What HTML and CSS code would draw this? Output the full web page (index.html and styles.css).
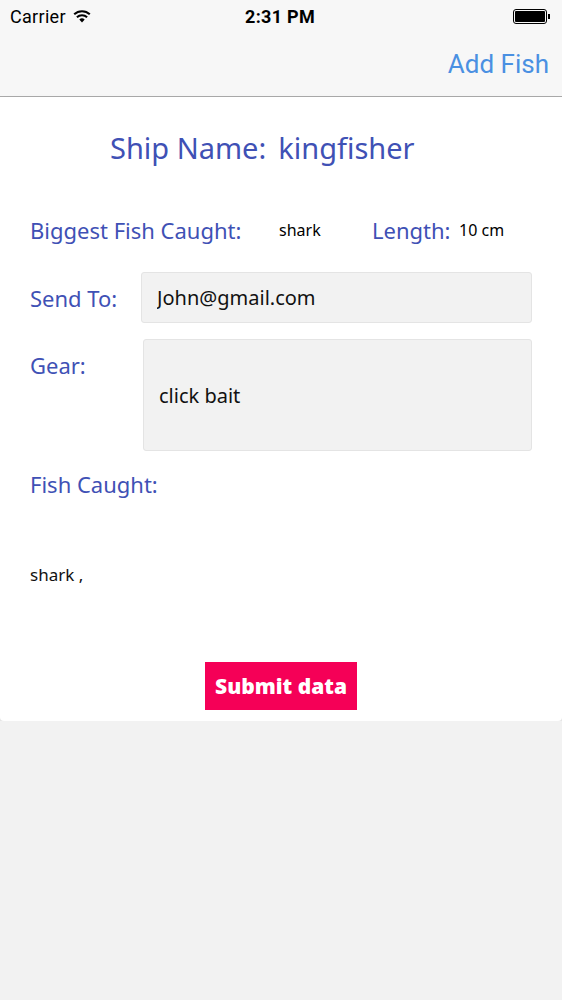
FILE: index.html
```html
<!DOCTYPE html>
<html>
<head>
    <title>Fish Log</title>
    <link rel="stylesheet" href="styles.css">
</head>
<body>
    <div class="topbar">
        <div class="status-bar">
            <div class="carrier">Carrier
                <svg class="wifi" width="18" height="13" viewBox="0 0 18 13">
                    <path d="M9 12.5 L6.3 9.6 A4 4 0 0 1 11.7 9.6 Z" fill="#000"/>
                    <path d="M3.9 7.2 A7.4 7.4 0 0 1 14.1 7.2" stroke="#000" stroke-width="2" fill="none"/>
                    <path d="M1.2 4.3 A11.2 11.2 0 0 1 16.8 4.3" stroke="#000" stroke-width="2" fill="none"/>
                </svg>
            </div>
            <div class="clock">2:31 PM</div>
            <div class="battery">
                <span class="battery-body"><span class="battery-fill"></span></span><span class="battery-tip"></span>
            </div>
        </div>
        <div class="nav-bar">
            <a class="nav-action">Add Fish</a>
        </div>
    </div>

    <div class="card">
        <h1 class="ship-name"><span class="ship-label">Ship Name:</span><span>kingfisher</span></h1>

        <div class="stats-row">
            <span class="label biggest-label">Biggest Fish Caught:</span>
            <span class="value fish-value">shark</span>
            <span class="label length-label">Length:</span>
            <span class="value">10 cm</span>
        </div>

        <div class="form-row">
            <label class="label" for="sendTo">Send To:</label>
            <input type="text" id="sendTo" class="field" value="John@gmail.com">
        </div>

        <div class="form-row gear-row">
            <label class="label" for="gear">Gear:</label>
            <div id="gear" class="field field-tall">click bait</div>
        </div>

        <div class="label caught-label">Fish Caught:</div>
        <div class="caught-list">shark ,</div>

        <div class="actions">
            <button class="submit">Submit data</button>
        </div>
    </div>
</body>
</html>
```

FILE: styles.css
```css
body {
    margin: 0;
    background-color: #f2f2f2;
    font-family: "Noto Sans", Lato, sans-serif;
}
.topbar {
    background-color: #f7f7f7;
    border-bottom: 1px solid #a9a9a9;
    height: 96px;
}
.status-bar {
    height: 32px;
    display: flex;
    align-items: center;
    justify-content: space-between;
    padding: 0 10px;
    font-family: Roboto, "Liberation Sans", sans-serif;
    font-size: 18px;
    color: #000;
}
.carrier {
    display: flex;
    align-items: center;
    gap: 7px;
    width: 120px;
    letter-spacing: 0.3px;
}
.clock {
    font-weight: bold;
    letter-spacing: 0.3px;
}
.battery {
    width: 120px;
    display: flex;
    align-items: center;
    justify-content: flex-end;
    padding-right: 2px;
}
.battery-body {
    display: inline-block;
    width: 30px;
    height: 11px;
    border: 1px solid #000;
    border-radius: 3px;
    padding: 1px;
}
.battery-fill {
    display: block;
    height: 100%;
    background-color: #000;
    border-radius: 1px;
}
.battery-tip {
    display: inline-block;
    width: 2px;
    height: 5px;
    background-color: #000;
    margin-left: 1px;
}
.nav-bar {
    height: 64px;
    display: flex;
    align-items: center;
    justify-content: flex-end;
    padding: 0 13px 0 0;
}
.nav-action {
    color: #4a90e2;
    font-family: Roboto, "Liberation Sans", sans-serif;
    font-size: 26px;
}
.card {
    background-color: #fff;
    border-radius: 0 0 4px 4px;
    box-shadow: 0 10px 16px -4px rgba(0, 0, 0, 0.2);
    padding: 31px 30px 11px 30px;
}
.ship-name {
    margin: 0 0 46px 80px;
    font-weight: normal;
    font-size: 29px;
    line-height: 40px;
    color: #3f51b5;
}
.ship-label {
    margin-right: 12px;
}
.label {
    color: #3f51b5;
    font-size: 22px;
    line-height: 30px;
}
.value {
    font-size: 16px;
    color: #000;
}
.stats-row {
    display: flex;
    align-items: center;
    height: 32px;
}
.biggest-label {
    width: 249px;
}
.fish-value {
    width: 93px;
}
.length-label {
    width: 87px;
}
.form-row {
    display: flex;
    align-items: center;
    margin-top: 26px;
}
.form-row .label {
    width: 111px;
    flex-shrink: 0;
}
.field {
    flex: 1;
    height: 51px;
    box-sizing: border-box;
    background-color: #f2f2f2;
    border: 1px solid #e4e4e4;
    border-radius: 3px;
    padding: 0 15px;
    font-family: "Noto Sans", Lato, sans-serif;
    font-size: 20px;
    color: #111;
    outline: none;
}
.gear-row {
    align-items: flex-start;
    margin-top: 16px;
}
.gear-row .label {
    width: 113px;
    margin-top: 11px;
}
.field-tall {
    height: 112px;
    display: flex;
    align-items: center;
}
.caught-label {
    margin-top: 18px;
}
.caught-list {
    margin-top: 65px;
    font-size: 17px;
    line-height: 22px;
    color: #111;
}
.actions {
    display: flex;
    justify-content: center;
    margin-top: 76px;
}
.submit {
    background-color: #f50057;
    color: #fff;
    border: none;
    width: 152px;
    height: 48px;
    font-family: "Noto Sans", Lato, sans-serif;
    font-weight: 900;
    font-size: 21px;
    padding: 0;
}
```
